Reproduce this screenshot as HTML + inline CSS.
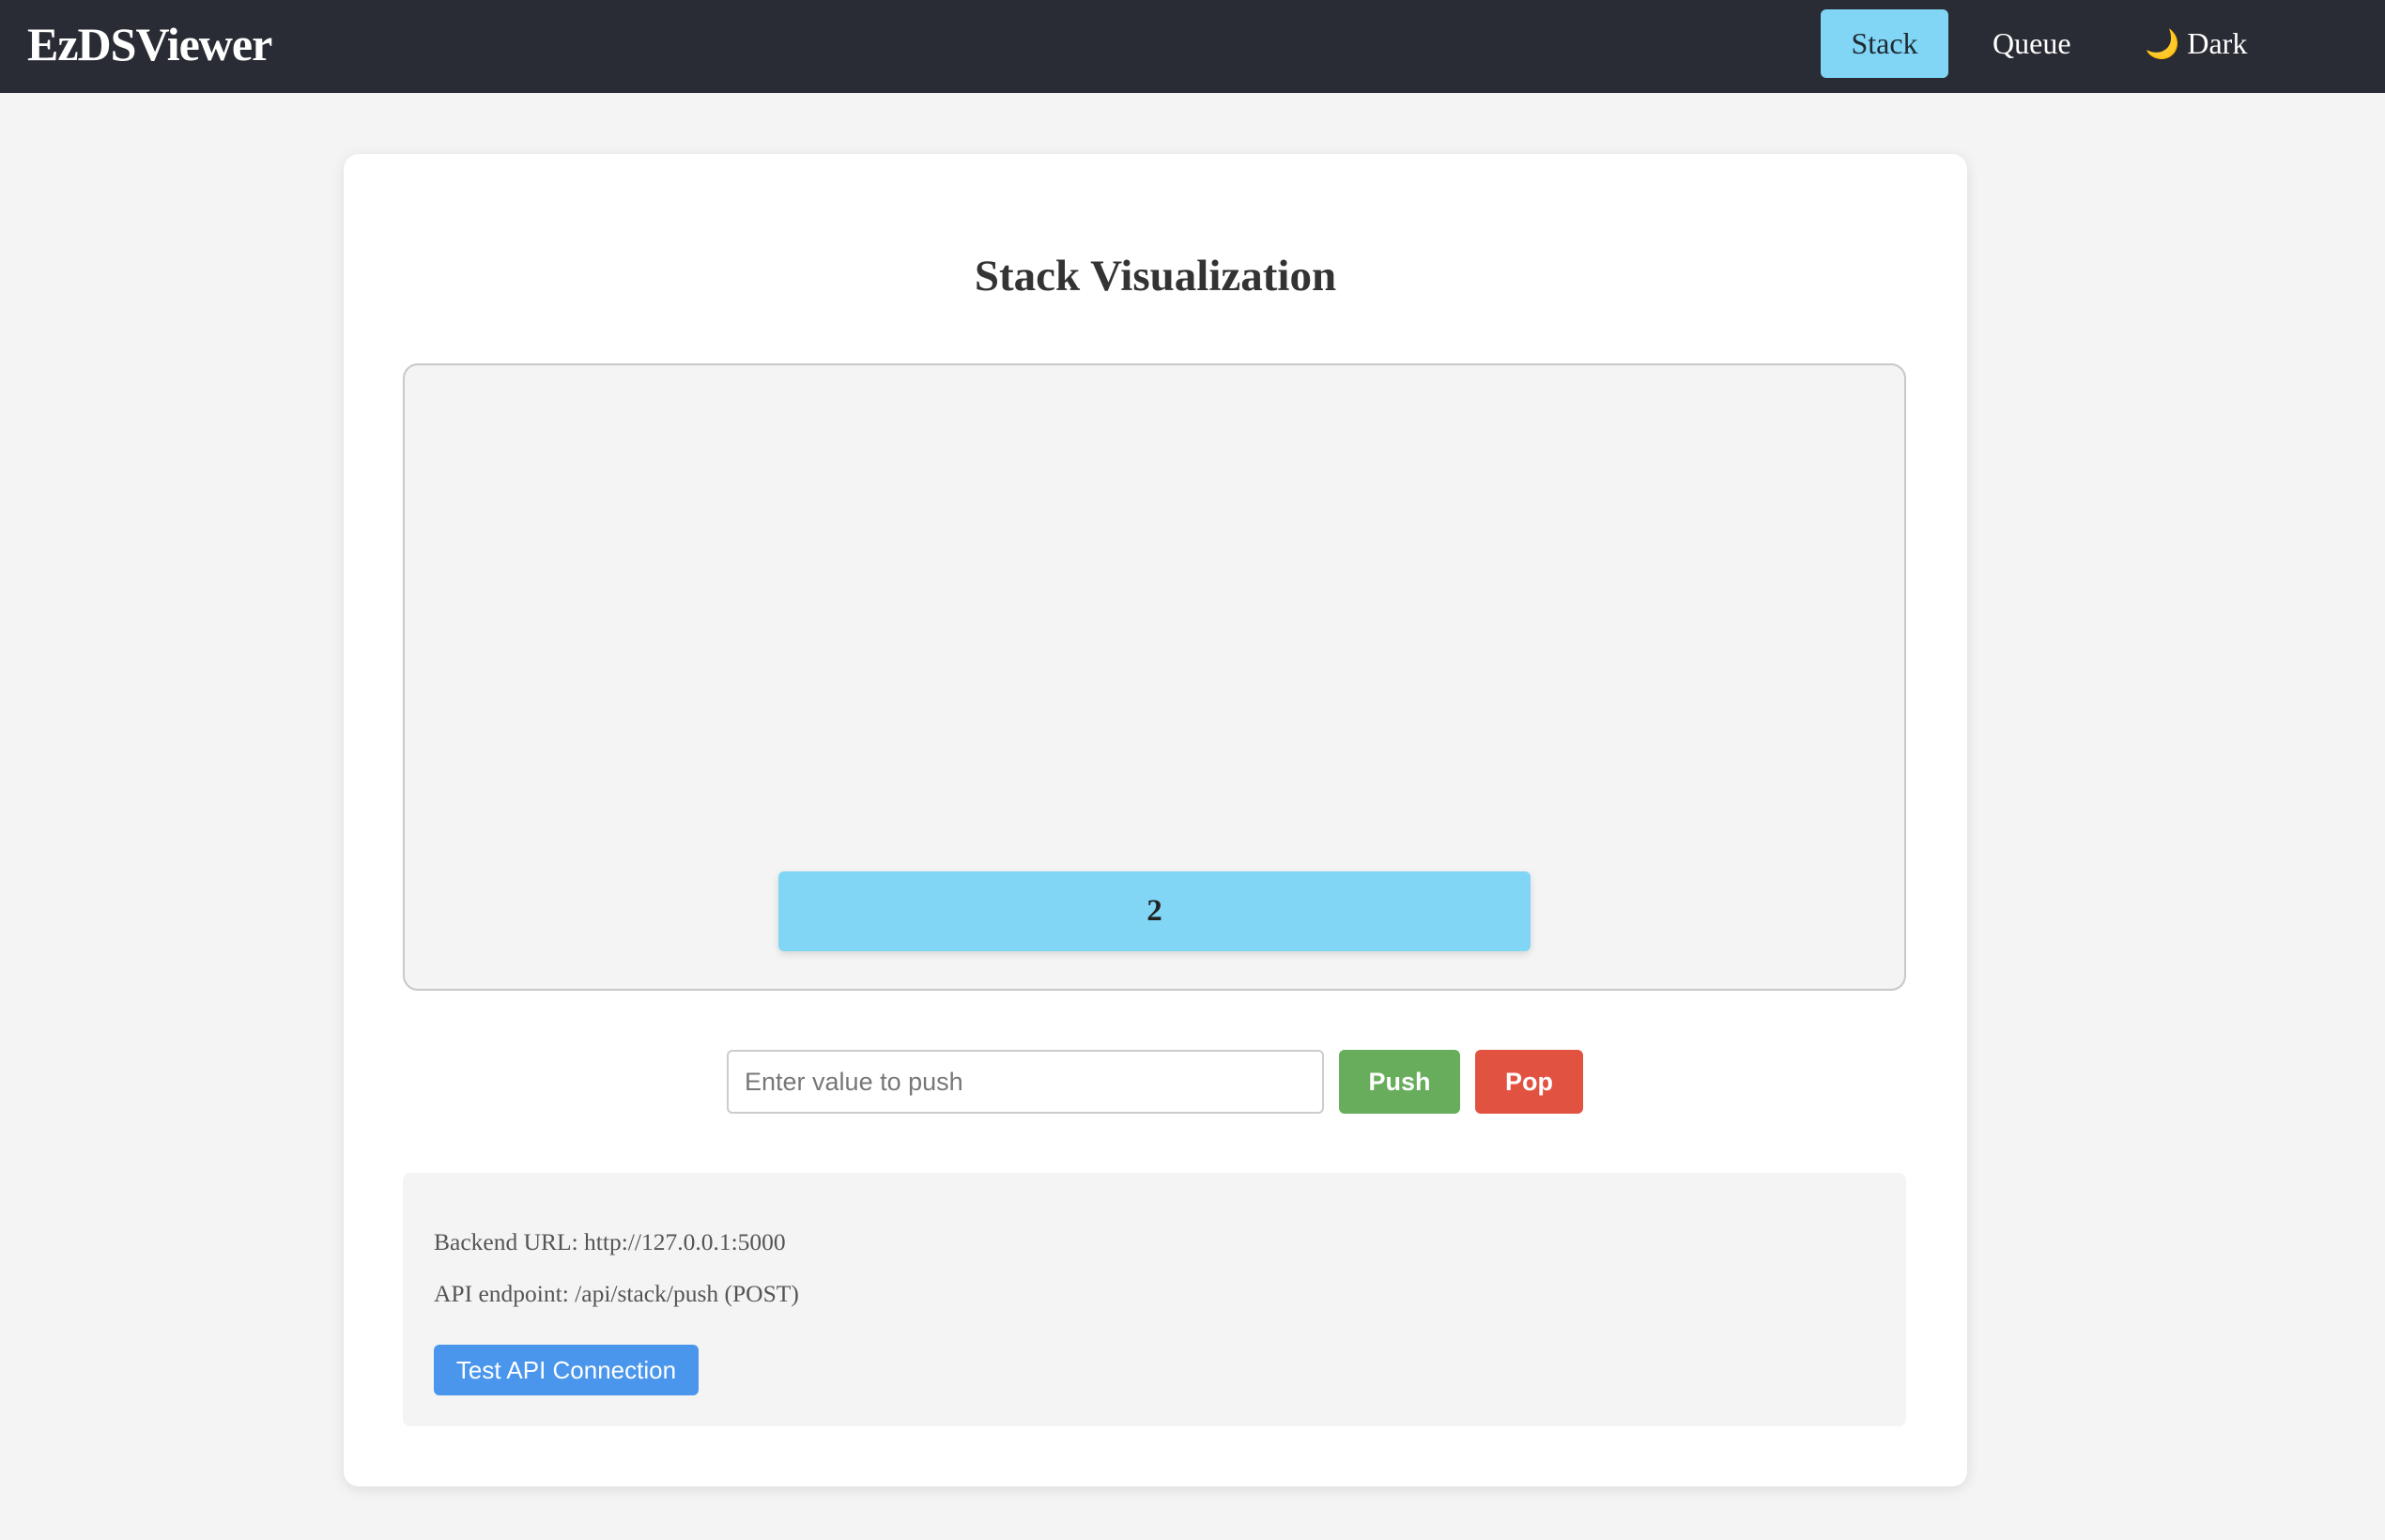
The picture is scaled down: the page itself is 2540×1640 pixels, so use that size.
<!DOCTYPE html>
<html><head><meta charset="utf-8"><style>
*{box-sizing:border-box;margin:0;padding:0}
body{width:2540px;height:1640px;background:#f4f4f4;font-family:"Liberation Serif",serif;position:relative;overflow:hidden}
.hdr{position:absolute;left:0;top:0;width:2540px;height:99px;background:#292c34}
.logo{position:absolute;left:29px;top:18px;font-size:50px;font-weight:bold;color:#fff;letter-spacing:-1px}
.nav{position:absolute;top:10px;height:73px;line-height:73px;font-size:32px;color:#fff}
.card{position:absolute;left:366px;top:164px;width:1729px;height:1419px;background:#fff;border-radius:16px;box-shadow:0 3px 14px rgba(0,0,0,.1)}
h1{position:absolute;left:366px;width:1729px;top:267px;text-align:center;font-size:47px;color:#333;font-weight:bold}
.viz{position:absolute;left:429px;top:387px;width:1601px;height:668px;border:2px solid #c8c8c8;border-radius:16px;background:#f4f4f4}
.item{position:absolute;left:829px;top:928px;width:801px;height:85px;background:#81d6f5;border-radius:6px;box-shadow:0 3px 8px rgba(0,0,0,.12);text-align:center;line-height:85px;font-size:33px;font-weight:bold;color:#222}
.inp{position:absolute;left:774px;top:1118px;width:636px;height:68px;border:2px solid #ccc;border-radius:6px;background:#fff;font-family:"Liberation Sans",sans-serif;font-size:27px;color:#777;line-height:64px;padding-left:17px}
.btn{position:absolute;top:1118px;height:68px;line-height:68px;border-radius:6px;color:#fff;font-family:"Liberation Sans",sans-serif;font-weight:bold;font-size:27px;text-align:center}
.info{position:absolute;left:429px;top:1249px;width:1601px;height:270px;background:#f4f4f4;border-radius:8px}
.t{position:absolute;left:462px;font-size:25.5px;color:#555}
.tb{position:absolute;left:462px;top:1432px;width:282px;height:54px;line-height:54px;background:#4a96ec;border-radius:6px;color:#fff;font-family:"Liberation Sans",sans-serif;font-size:26px;text-align:center}
</style></head><body>
<div class="hdr">
<div class="logo">EzDSViewer</div>
<div class="nav" style="left:1939px;width:136px;background:#81d6f5;border-radius:6px;color:#1f2a33;text-align:center">Stack</div>
<div class="nav" style="left:2122px">Queue</div>
<div class="nav" style="left:2284px"><span style="color:#f5c542;font-size:30px">🌙</span> Dark</div>
</div>
<div class="card"></div>
<h1>Stack Visualization</h1>
<div class="viz"></div>
<div class="item">2</div>
<div class="inp">Enter value to push</div>
<div class="btn" style="left:1426px;width:129px;background:#67ad5b">Push</div>
<div class="btn" style="left:1571px;width:115px;background:#e25241">Pop</div>
<div class="info"></div>
<div class="t" style="top:1308px">Backend URL: http://127.0.0.1:5000</div>
<div class="t" style="top:1363px">API endpoint: /api/stack/push (POST)</div>
<div class="tb">Test API Connection</div>
</body></html>
